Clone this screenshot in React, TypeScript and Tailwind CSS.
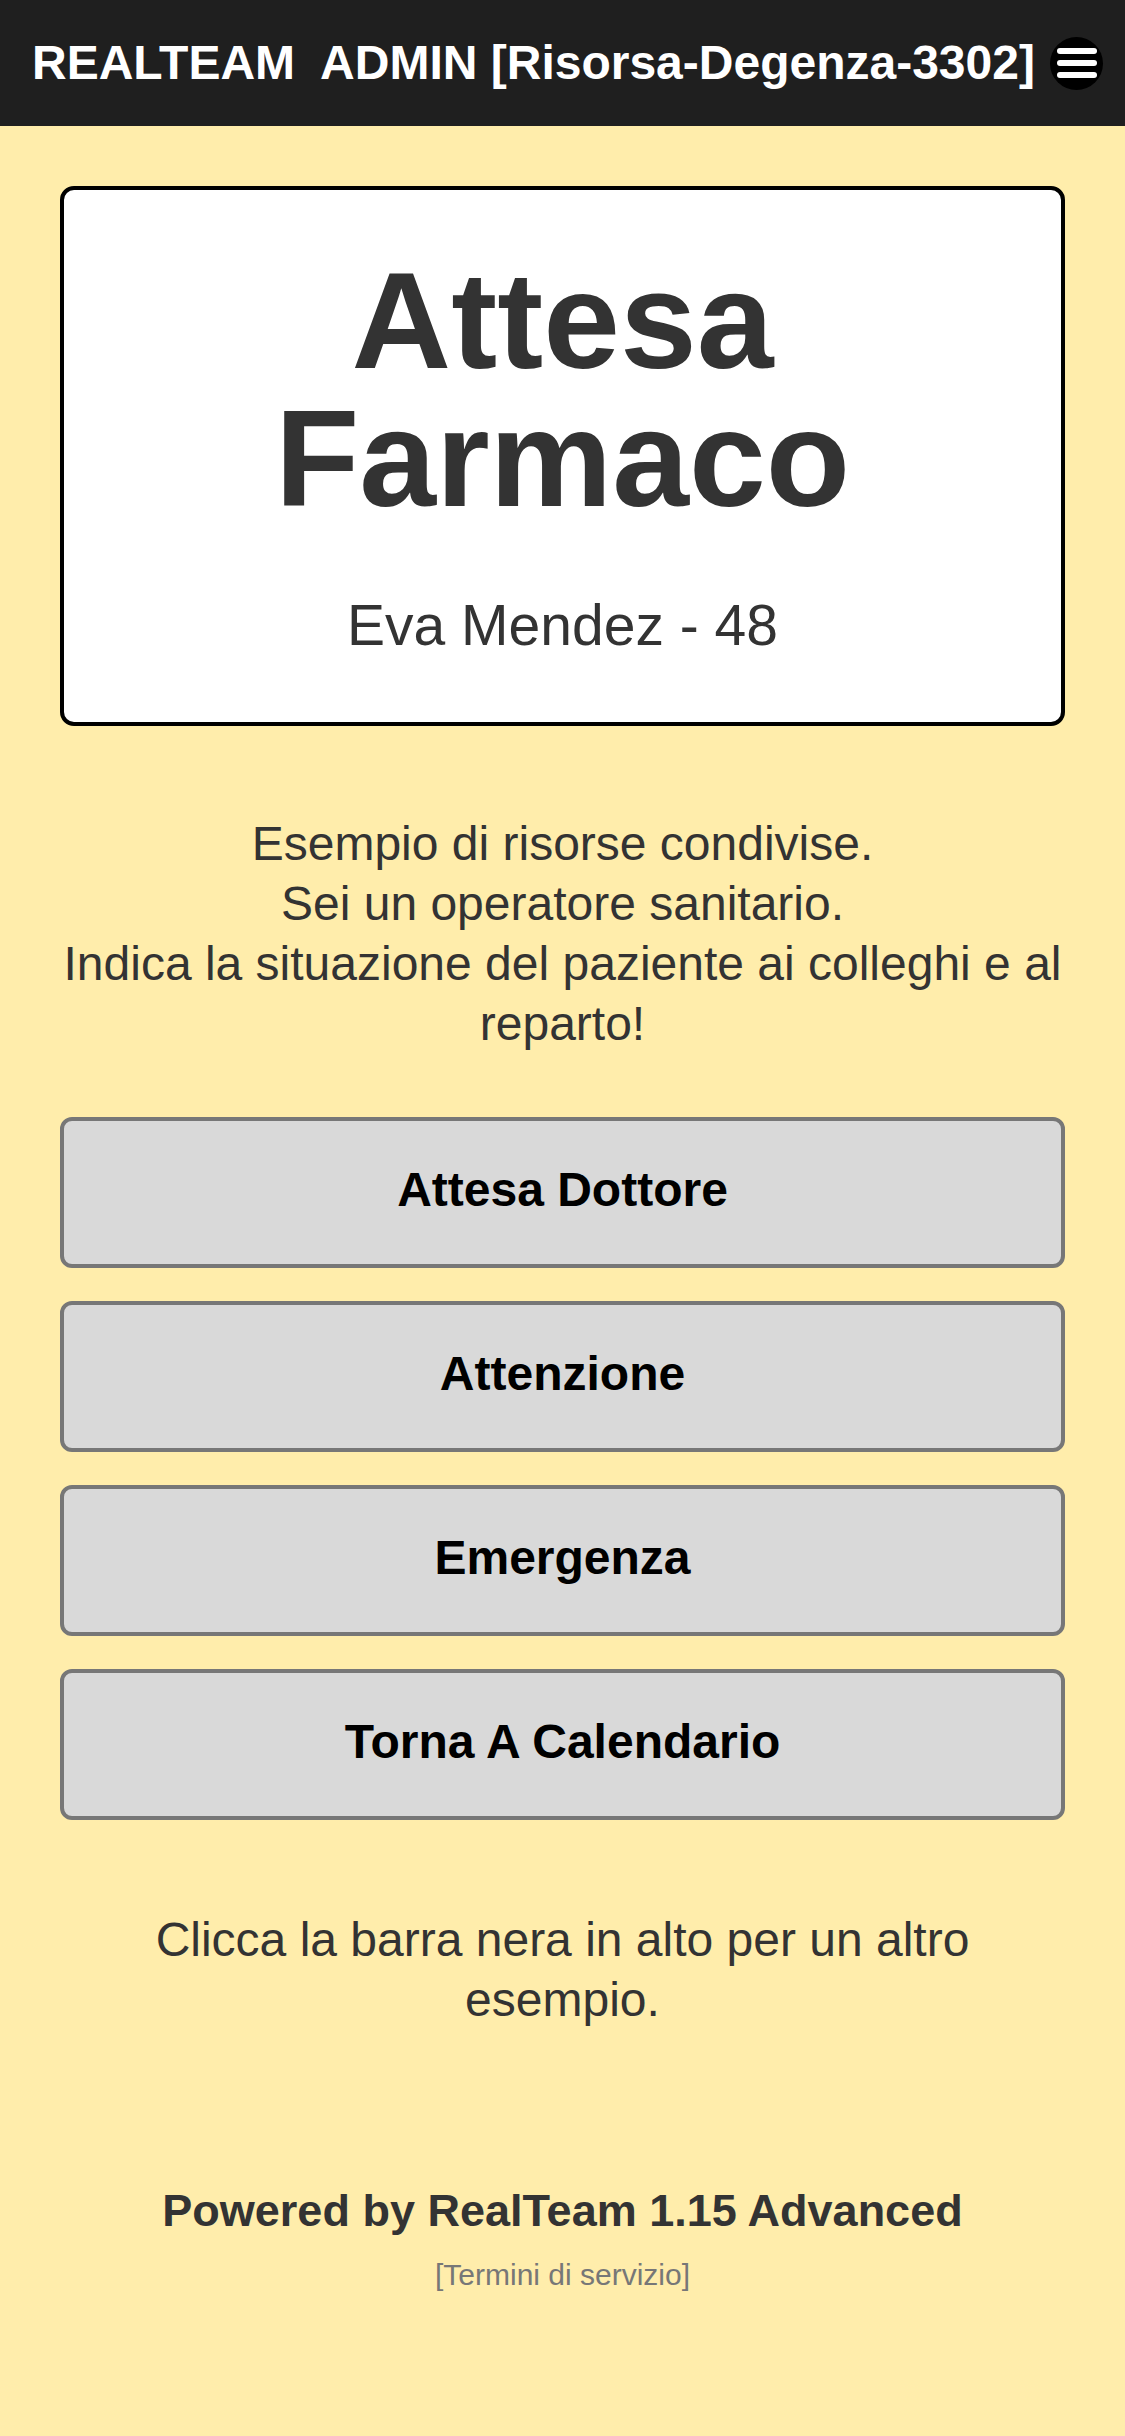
import React from "react";

export default function App() {
  const buttons = ["Attesa Dottore", "Attenzione", "Emergenza", "Torna A Calendario"];
  return (
    <div className="min-h-[2436px] w-full bg-[#ffedab] font-['Liberation_Sans',Arial,sans-serif] text-[#333]">
      <header className="flex h-[126px] items-center justify-between bg-[#1f1f1f] pl-[32px] pr-[22px]">
        <div className="whitespace-nowrap text-[48px] font-bold leading-none text-white">
          <span>REALTEAM</span>
          <span className="ml-[25px]">ADMIN [Risorsa-Degenza-3302]</span>
        </div>
        <div className="flex h-[53px] w-[53px] flex-col items-center justify-center gap-[6px] rounded-full bg-black">
          <div className="h-[6px] w-[40px] rounded-full bg-white" />
          <div className="h-[6px] w-[40px] rounded-full bg-white" />
          <div className="h-[6px] w-[40px] rounded-full bg-white" />
        </div>
      </header>

      <main className="px-[60px] pb-[120px]">
        <section className="mt-[60px] rounded-[14px] border-[4px] border-black bg-white pb-[64px] pt-[61px] text-center">
          <h1 className="text-[138px] font-bold leading-[138px] text-[#333]">
            <span className="block">Attesa</span>
            <span className="block">Farmaco</span>
          </h1>
          <p className="mt-[65px] text-[57px] leading-[66px] text-[#333]">Eva Mendez - 48</p>
        </section>

        <p className="mt-[88px] text-center text-[48px] leading-[60px] text-[#333]">
          Esempio di risorse condivise.
          <br />
          Sei un operatore sanitario.
          <br />
          Indica la situazione del paziente ai colleghi e al reparto!
        </p>

        <div className="mt-[63px] flex flex-col gap-[33px]">
          {buttons.map((b) => (
            <button
              key={b}
              className="flex h-[151px] w-full items-center justify-center rounded-[12px] border-[4px] border-[#777] bg-[#d9d9d9] pb-[5px] text-[48px] font-bold text-black"
            >
              {b}
            </button>
          ))}
        </div>

        <p className="mt-[90px] text-center text-[48px] leading-[60px] text-[#333]">
          Clicca la barra nera in alto per un altro esempio.
        </p>

        <p className="mt-[155px] text-center text-[45px] font-bold leading-[52px] text-[#333]">
          Powered by RealTeam 1.15 Advanced
        </p>
        <p className="mt-[20px] text-center text-[30px] leading-[35px] text-[#777]">[Termini di servizio]</p>
      </main>
    </div>
  );
}
